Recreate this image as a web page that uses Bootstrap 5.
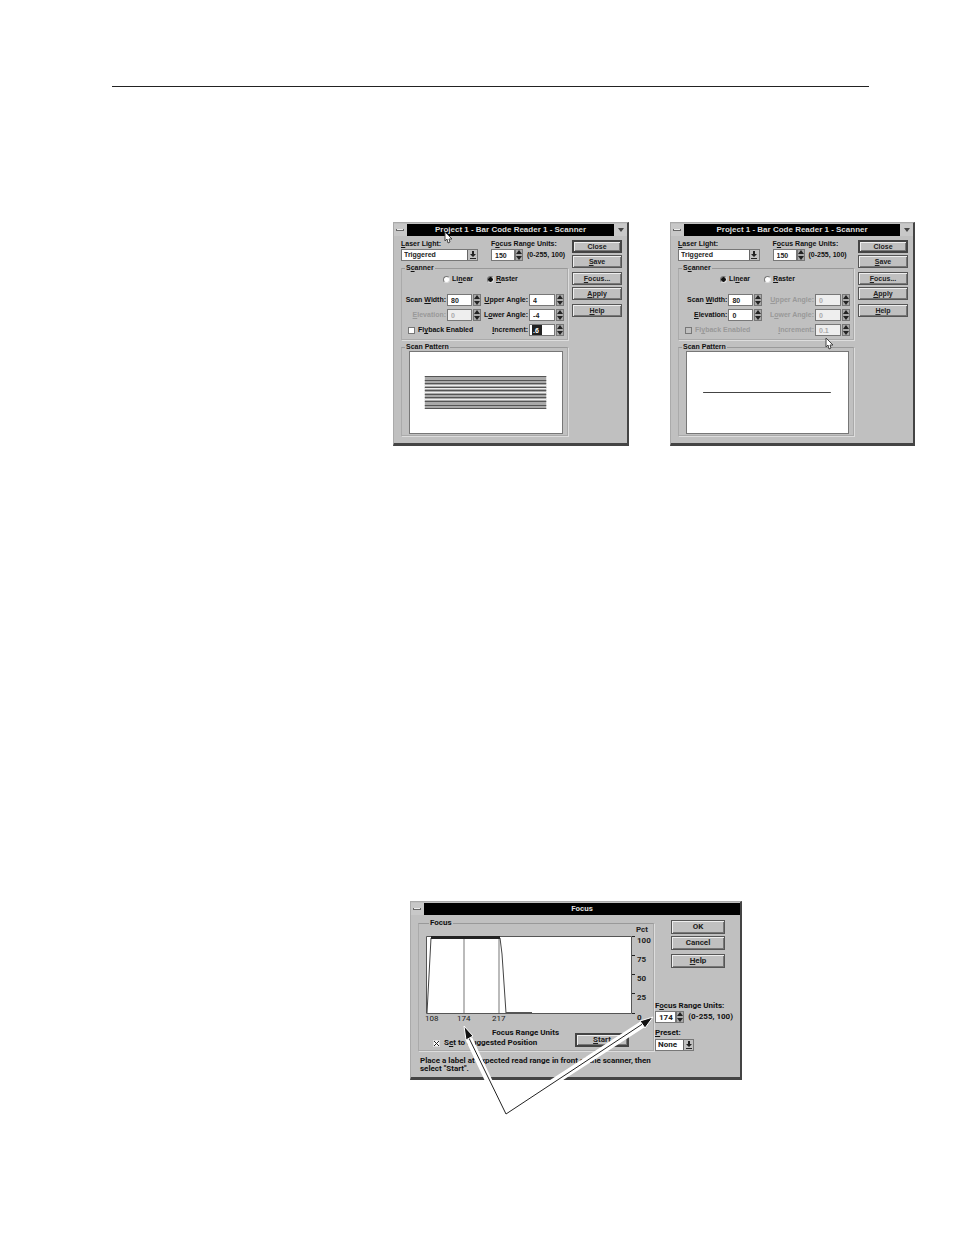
<!DOCTYPE html>
<html lang="en">
<head>
<meta charset="utf-8">
<meta name="viewport" content="width=device-width, initial-scale=1">
<title>Scanner and Focus dialogs</title>
<link href="https://cdn.jsdelivr.net/npm/bootstrap@5.3.0/dist/css/bootstrap.min.css" rel="stylesheet">
<script src="https://cdn.jsdelivr.net/npm/bootstrap@5.3.0/dist/js/bootstrap.bundle.min.js"></script>
<style>
  body { background: #fff; color: #111; font-family: "Liberation Sans", Arial, sans-serif; }
  .sheet { padding: 86px 39px 100px 112px; }
  .rule { border-top: 1px solid #222; margin-right: 46px; }
  .scanners { margin: 135px 0 0 281px; gap: 41px; }
  .focus-fig { margin: 455px 0 0 298px; max-width: 332px; }
  .dlg { background: #c0c0c0; border: 1px solid #aaa; border-right: 2px solid #444; border-bottom: 3px solid #444; font-size: 7px; line-height: 8px; font-weight: 700; }
  .dlg-a { flex: 236 1 0; }
  .dlg-b { flex: 245 1 0; }
  .dlg-c { font-family: Roboto, "Liberation Sans", sans-serif; font-size: 8px; }
  .titlebar { height: 13px; padding-top: 1px; }
  .titlebar h2 { background: #000; color: #ddd; font-size: 8px; line-height: 12px; font-weight: 700; }
  .titlebar button { width: 13px; border: 0; background: #c8c8c8; padding: 0; }
  .titlebar svg, .arrow-ico svg, .spin svg { display: block; margin: auto; }
  .dlg-body { padding: 4px 5px 7px 7px; }
  .side { width: 50px; gap: 2px; }
  .btn3 { display: block; width: 100%; height: 13px; padding: 0; border: 1px solid #555; background: #c0c0c0; box-shadow: inset 1px 1px #eee, inset -1px -1px #777; font-weight: 700; line-height: 8px; color: #222; }
  .btn3.dflt { border: 2px solid #444; }
  .gap-up { margin-top: 2px; }
  .fld, .pick select { height: 12px; padding: 0 0 0 3px; border: 1px solid #777; border-radius: 0; background: #fff; font-weight: 700; color: #222; min-width: 0; width: 100%; line-height: 8px; display: block; }
  .fld:disabled { color: #aaa; background: #eee; opacity: 1; }
  .fld.hot { background: linear-gradient(90deg, #fff 2px, #222 2px, #222 12px, #fff 12px); color: #fff; }
  .range-in { width: 24px; }
  .pick { position: relative; }
  .pick select { appearance: none; padding-left: 2px; }
  .arrow-ico { position: absolute; right: 1px; top: 1px; width: 10px; height: 10px; background: #c0c0c0; border-left: 1px solid #666; pointer-events: none; }
  .spin { width: 8px; height: 12px; padding: 0; border: 1px solid #777; background: #aaa; }
  .top-grid { display: grid; grid-template-columns: minmax(0, 78fr) minmax(0, 78fr); column-gap: 13px; row-gap: 1px; align-items: center; }
  .grp { border: 1px solid #aaa; border-top-color: #999; box-shadow: 1px 1px #ddd; margin: 0; padding: 0 3px 0 0; min-width: 0; }
  .grp legend { float: none; width: auto; font-size: inherit; line-height: 8px; margin: 0 0 0 3px; padding: 0 1px; }
  .radios { gap: 14px; padding: 3px 0 0 41px; }
  .radios label { gap: 2px; }
  .radios input, .tick { appearance: none; width: 7px; height: 7px; margin: 0; background: #fff; border: 1px solid #777; flex: none; }
  .radios input { border-radius: 50%; border-right-color: #ddd; border-bottom-color: #ddd; }
  .radios input:checked { background: radial-gradient(#111 2px, #fff 3px); }
  .tick:disabled { background: #c0c0c0; }
  .tick:checked { border-color: #ddd; background: linear-gradient(45deg, transparent 3px, #222 3px, #222 4px, transparent 4px), linear-gradient(-45deg, transparent 3px, #222 3px, #222 4px, transparent 4px), #fff; }
  .fields { display: grid; grid-template-columns: minmax(0, 46fr) 25px 8px minmax(0, 48fr) 26px 8px; column-gap: 1px; row-gap: 3px; padding: 11px 0 3px; align-items: center; }
  .fields > label { white-space: nowrap; justify-self: end; }
  .fields > .flyback { grid-column: span 3; justify-self: start; padding-left: 6px; gap: 3px; }
  .dim { color: #999; }
  .pattern { margin: 0 2px 1px 7px; border: 1px solid #777; background: #fff; height: 83px; display: block; width: calc(100% - 8px); }
  .scan-box { margin-top: 3px; }
  .cursor { position: absolute; width: 8px; height: 13px; }
  .cursor-a { left: 50px; top: 8px; }
  .cursor-b { right: 80px; top: 114px; }
  .focus-body { padding: 4px 7px 4px 7px; }
  .focus-grp { width: 236px; padding: 0 0 0 7px; }
  .focus-side { width: 78px; }
  .focus-side .btn3, .start { width: 54px; height: 14px; }
  .stack { gap: 2px; margin: 1px 0 0 16px; }
  .units-label { margin-bottom: 1px; }
  .units-row { margin-bottom: 6px; }
  .preset-label { margin-bottom: 2px; }
  .plot { display: block; width: 228px; height: 102px; font-size: 8px; overflow: visible; }
  .axis-name { padding-left: 66px; }
  .suggest { gap: 4px; margin: 2px 0 3px 7px; }
  .leaders { position: absolute; left: 0; top: 0; overflow: visible; }
  .note { margin: 6px 0 0 2px; max-width: 240px; }
</style>
</head>
<body>
<main class="sheet">
  <div class="rule"></div>

  <div class="scanners d-flex align-items-start">
    <section class="dlg dlg-a position-relative">
      <div class="titlebar d-flex">
        <button type="button" aria-label="Control menu"><svg width="9" height="3"><path d="M0 0h8v2H0z" fill="#666"/><path d="M1 0h6v1H1z" fill="#eee"/></svg></button>
        <h2 class="flex-grow-1 text-center m-0 text-nowrap">Project 1 - Bar Code Reader 1 - Scanner</h2>
        <button type="button" aria-label="Minimize"><svg width="6" height="4"><path d="M0 0h6L3 4z" fill="#444"/></svg></button>
      </div>
      <div class="dlg-body d-flex justify-content-between">
        <form class="flex-grow-1 me-1">
          <div class="top-grid">
            <label for="laserA"><u>L</u>aser Light:</label>
            <label for="rangeA">F<u>o</u>cus Range Units:</label>
            <div class="pick"><select id="laserA"><option>Triggered</option></select><span class="arrow-ico"><svg width="8" height="10"><path d="M3 1h2v3h2L4 7 1 4h2zM1 8h6v1H1z" fill="#222"/></svg></span></div>
            <div class="d-flex align-items-center text-nowrap"><div class="range-in"><input class="fld" id="rangeA" value="150"></div><button type="button" class="spin me-1" aria-label="Step"><svg width="6" height="10"><path d="M0 4l3-4 3 4zM0 6h6l-3 4z" fill="#222"/></svg></button>(0-255, 100)</div>
          </div>
          <fieldset class="grp scan-box">
            <legend>S<u>c</u>anner</legend>
            <div class="radios d-flex">
              <label class="d-flex align-items-center"><input type="radio" name="modeA"><span>Li<u>n</u>ear</span></label>
              <label class="d-flex align-items-center"><input type="radio" name="modeA" checked><span><u>R</u>aster</span></label>
            </div>
            <div class="fields">
              <label for="wA">Scan <u>W</u>idth:</label><input class="fld" id="wA" value="80"><button type="button" class="spin" aria-label="Step"><svg width="6" height="10"><path d="M0 4l3-4 3 4zM0 6h6l-3 4z" fill="#222"/></svg></button>
              <label for="uA"><u>U</u>pper Angle:</label><input class="fld" id="uA" value="4"><button type="button" class="spin" aria-label="Step"><svg width="6" height="10"><path d="M0 4l3-4 3 4zM0 6h6l-3 4z" fill="#222"/></svg></button>
              <label for="eA" class="dim"><u>E</u>levation:</label><input class="fld" id="eA" value="0" disabled><button type="button" class="spin" aria-label="Step"><svg width="6" height="10"><path d="M0 4l3-4 3 4zM0 6h6l-3 4z" fill="#222"/></svg></button>
              <label for="lA">L<u>o</u>wer Angle:</label><input class="fld" id="lA" value="-4"><button type="button" class="spin" aria-label="Step"><svg width="6" height="10"><path d="M0 4l3-4 3 4zM0 6h6l-3 4z" fill="#222"/></svg></button>
              <label class="flyback d-flex align-items-center"><input type="checkbox" class="tick"><span>Fl<u>y</u>back Enabled</span></label>
              <label for="iA"><u>I</u>ncrement:</label><input class="fld hot" id="iA" value=".6"><button type="button" class="spin" aria-label="Step"><svg width="6" height="10"><path d="M0 4l3-4 3 4zM0 6h6l-3 4z" fill="#222"/></svg></button>
            </div>
          </fieldset>
          <fieldset class="grp scan-box">
            <legend>Scan Pattern</legend>
            <svg class="pattern" viewBox="0 0 154 81" preserveAspectRatio="none"><path fill="#aaa" d="M15 24h123v33H15z"/><path stroke="#555" d="M15 24.500h123M15 28.500h123M15 31.500h123M15 35.500h123M15 38.500h123M15 42.500h123M15 45.500h123M15 49.500h123M15 53.500h123M15 56.500h123"/><path stroke="#eee" d="M15 33.500h123M15 36.500h123M15 40.500h123M15 47.500h123"/></svg>
          </fieldset>
        </form>
        <div class="side d-flex flex-column flex-shrink-0">
          <button type="button" class="btn3 dflt">Close</button>
          <button type="button" class="btn3"><u>S</u>ave</button>
          <button type="button" class="btn3 gap-up"><u>F</u>ocus...</button>
          <button type="button" class="btn3"><u>A</u>pply</button>
          <button type="button" class="btn3 gap-up"><u>H</u>elp</button>
        </div>
      </div>
      <svg class="cursor cursor-a" viewBox="0 0 8 13"><path d="M1 1v9l2-2 1 4 2-1-1-3h3z" fill="#fff" stroke="#444"/></svg>
    </section>

    <section class="dlg dlg-b position-relative">
      <div class="titlebar d-flex">
        <button type="button" aria-label="Control menu"><svg width="9" height="3"><path d="M0 0h8v2H0z" fill="#666"/><path d="M1 0h6v1H1z" fill="#eee"/></svg></button>
        <h2 class="flex-grow-1 text-center m-0 text-nowrap">Project 1 - Bar Code Reader 1 - Scanner</h2>
        <button type="button" aria-label="Minimize"><svg width="6" height="4"><path d="M0 0h6L3 4z" fill="#444"/></svg></button>
      </div>
      <div class="dlg-body d-flex justify-content-between">
        <form class="flex-grow-1 me-1">
          <div class="top-grid">
            <label for="laserB"><u>L</u>aser Light:</label>
            <label for="rangeB">F<u>o</u>cus Range Units:</label>
            <div class="pick"><select id="laserB"><option>Triggered</option></select><span class="arrow-ico"><svg width="8" height="10"><path d="M3 1h2v3h2L4 7 1 4h2zM1 8h6v1H1z" fill="#222"/></svg></span></div>
            <div class="d-flex align-items-center text-nowrap"><div class="range-in"><input class="fld" id="rangeB" value="150"></div><button type="button" class="spin me-1" aria-label="Step"><svg width="6" height="10"><path d="M0 4l3-4 3 4zM0 6h6l-3 4z" fill="#222"/></svg></button>(0-255, 100)</div>
          </div>
          <fieldset class="grp scan-box">
            <legend>S<u>c</u>anner</legend>
            <div class="radios d-flex">
              <label class="d-flex align-items-center"><input type="radio" name="modeB" checked><span>Li<u>n</u>ear</span></label>
              <label class="d-flex align-items-center"><input type="radio" name="modeB"><span><u>R</u>aster</span></label>
            </div>
            <div class="fields">
              <label for="wB">Scan <u>W</u>idth:</label><input class="fld" id="wB" value="80"><button type="button" class="spin" aria-label="Step"><svg width="6" height="10"><path d="M0 4l3-4 3 4zM0 6h6l-3 4z" fill="#222"/></svg></button>
              <label for="uB" class="dim"><u>U</u>pper Angle:</label><input class="fld" id="uB" value="0" disabled><button type="button" class="spin" aria-label="Step"><svg width="6" height="10"><path d="M0 4l3-4 3 4zM0 6h6l-3 4z" fill="#222"/></svg></button>
              <label for="eB"><u>E</u>levation:</label><input class="fld" id="eB" value="0"><button type="button" class="spin" aria-label="Step"><svg width="6" height="10"><path d="M0 4l3-4 3 4zM0 6h6l-3 4z" fill="#222"/></svg></button>
              <label for="lB" class="dim">L<u>o</u>wer Angle:</label><input class="fld" id="lB" value="0" disabled><button type="button" class="spin" aria-label="Step"><svg width="6" height="10"><path d="M0 4l3-4 3 4zM0 6h6l-3 4z" fill="#222"/></svg></button>
              <label class="flyback dim d-flex align-items-center"><input type="checkbox" class="tick" disabled><span>Fl<u>y</u>back Enabled</span></label>
              <label for="iB" class="dim"><u>I</u>ncrement:</label><input class="fld" id="iB" value="0.1" disabled><button type="button" class="spin" aria-label="Step"><svg width="6" height="10"><path d="M0 4l3-4 3 4zM0 6h6l-3 4z" fill="#222"/></svg></button>
            </div>
          </fieldset>
          <fieldset class="grp scan-box">
            <legend>Scan Pattern</legend>
            <svg class="pattern" viewBox="0 0 160 81" preserveAspectRatio="none"><path stroke="#444" d="M16 40.500h127"/></svg>
          </fieldset>
        </form>
        <div class="side d-flex flex-column flex-shrink-0">
          <button type="button" class="btn3 dflt">Close</button>
          <button type="button" class="btn3"><u>S</u>ave</button>
          <button type="button" class="btn3 gap-up"><u>F</u>ocus...</button>
          <button type="button" class="btn3"><u>A</u>pply</button>
          <button type="button" class="btn3 gap-up"><u>H</u>elp</button>
        </div>
      </div>
      <svg class="cursor cursor-b" viewBox="0 0 8 13"><path d="M1 1v9l2-2 1 4 2-1-1-3h3z" fill="#fff" stroke="#444"/></svg>
    </section>
  </div>

  <div class="focus-fig position-relative">
    <section class="dlg dlg-c">
      <div class="titlebar d-flex">
        <button type="button" aria-label="Control menu"><svg width="9" height="3"><path d="M0 0h8v2H0z" fill="#666"/><path d="M1 0h6v1H1z" fill="#eee"/></svg></button>
        <h2 class="flex-grow-1 text-center m-0">Focus</h2>
      </div>
      <form class="focus-body">
        <div class="d-flex justify-content-between">
          <fieldset class="grp focus-grp">
            <legend>Focus</legend>
            <svg class="plot" viewBox="0 0 228 102" font-weight="700" fill="#222">
              <path d="M.5 9.500h205v77H.5z" fill="#fff" stroke="#555"/>
              <path d="M37 10h2v76h-2zM72 10h2v76h-2z" fill="#bbb"/>
              <path d="M1 86L5 11M74 11l2 16 4 59" fill="none" stroke="#444"/>
              <path d="M5 9h69v3H5z"/><path d="M80 85h26v1H80z" fill="#555"/>
              <path d="M206 9h3v1h-3zM206 28h3v1h-3zM206 47h3v1h-3zM206 66h3v1h-3zM206 86h3v1h-3z"/>
              <text x="210" y="5">Pct</text><text x="211" y="16">100</text><text x="211" y="35">75</text><text x="211" y="54">50</text><text x="211" y="73">25</text><text x="211" y="93">0</text>
              <g font-weight="400"><text x="-1" y="94">108</text><text x="31" y="94">174</text><text x="66" y="94">217</text></g>
            </svg>
            <div class="d-flex align-items-center justify-content-between pe-4">
              <div>
                <div class="axis-name text-nowrap">Focus Range Units</div>
                <label class="suggest d-flex align-items-center text-nowrap"><input type="checkbox" class="tick" checked><span>S<u>e</u>t to Suggested Position</span></label>
              </div>
              <button type="button" class="btn3 start dflt"><u>S</u>tart</button>
            </div>
          </fieldset>
          <div class="focus-side d-flex flex-column">
            <div class="stack d-flex flex-column"><button type="button" class="btn3">OK</button><button type="button" class="btn3">Cancel</button><button type="button" class="btn3 gap-up"><u>H</u>elp</button></div>
            <div class="mt-auto text-nowrap">
              <label for="rangeC" class="units-label d-block">F<u>o</u>cus Range Units:</label>
              <div class="units-row d-flex align-items-center"><div class="range-in"><input class="fld" id="rangeC" value="174"></div><button type="button" class="spin me-1" aria-label="Step"><svg width="6" height="10"><path d="M0 4l3-4 3 4zM0 6h6l-3 4z" fill="#222"/></svg></button>(0-255, 100)</div>
              <label for="preset" class="preset-label d-block"><u>P</u>reset:</label>
              <div class="pick w-50"><select id="preset"><option>None</option></select><span class="arrow-ico"><svg width="8" height="10"><path d="M3 1h2v3h2L4 7 1 4h2zM1 8h6v1H1z" fill="#222"/></svg></span></div>
            </div>
          </div>
        </div>
        <p class="note">Place a label at expected read range in front of the scanner, then select "Start".</p>
      </form>
    </section>
    <svg class="leaders" width="332" height="216" viewBox="0 0 332 216"><path d="M59 138l25 53M233 123L122 195" stroke="#fff" stroke-width="7" fill="none"/><path d="M57 133L96 213 237 120" stroke="#222" fill="none"/><path d="M54 125l9 10-7 4zM243 116l-13 4 5 7z" fill="#111" stroke="#fff"/></svg>
  </div>
</main>
</body>
</html>
